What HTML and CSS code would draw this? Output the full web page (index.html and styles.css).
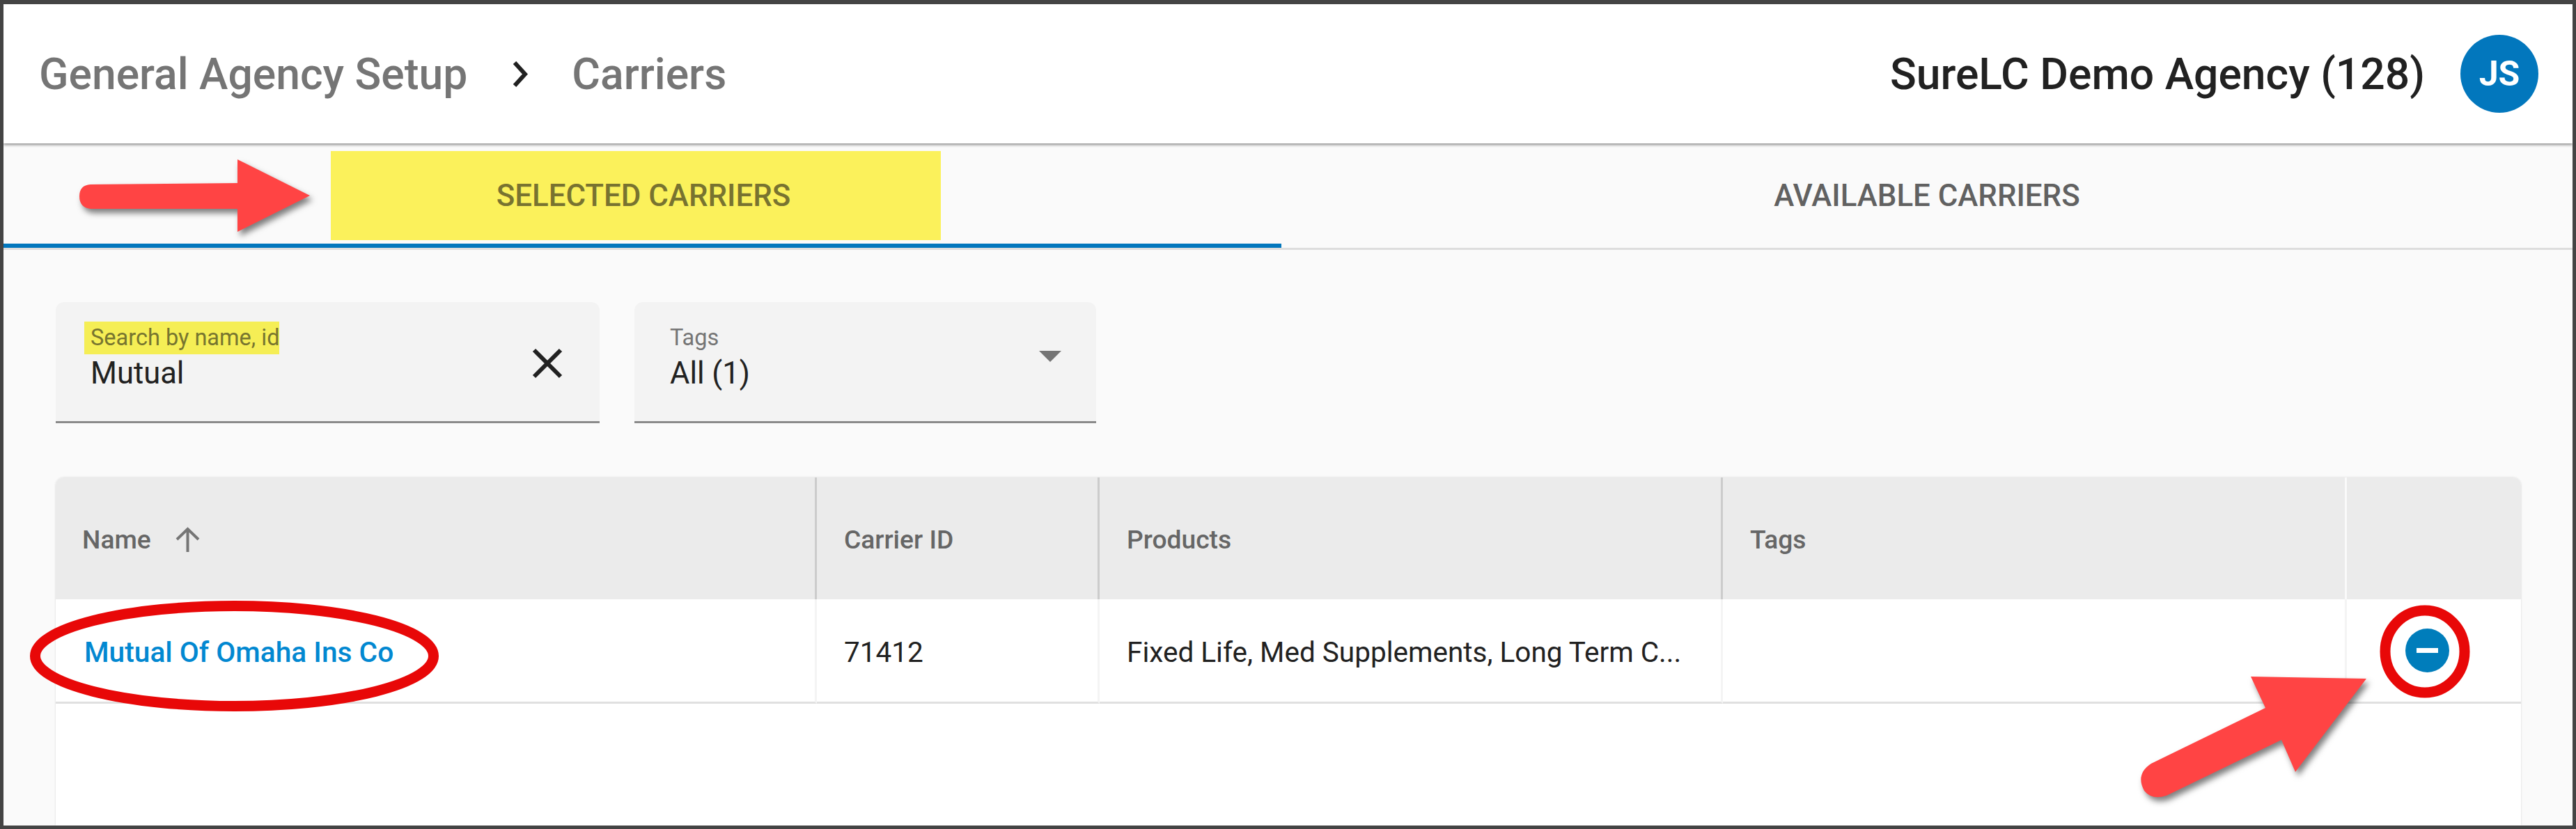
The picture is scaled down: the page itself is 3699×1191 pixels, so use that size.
FILE: index.html
```html
<!DOCTYPE html>
<html lang="en">
<head>
<meta charset="utf-8">
<title>Carriers</title>
<link rel="stylesheet" href="styles.css">
</head>
<body>
<div class="frame">
  <header class="topbar">
    <nav class="crumbs">
      <span class="crumb">General Agency Setup</span>
      <svg class="crumb-sep" viewBox="0 0 22 37" aria-hidden="true"><path d="M3 2 L18 18.5 L3 35"/></svg>
      <span class="crumb">Carriers</span>
    </nav>
    <div class="account">
      <span class="agency">SureLC Demo Agency (128)</span>
      <span class="avatar">JS</span>
    </div>
  </header>

  <div class="tabs">
    <div class="tab tab-active"><span class="tab-mark">SELECTED CARRIERS</span></div>
    <div class="tab">AVAILABLE CARRIERS</div>
  </div>

  <main class="content">
    <div class="filters">
      <div class="field field-search">
        <div class="field-body">
          <span class="field-label field-label-mark">Search by name, id</span>
          <span class="field-value">Mutual</span>
        </div>
        <svg class="clear-icon" viewBox="0 0 44 44" aria-hidden="true"><path d="M3 3 L41 41 M41 3 L3 41"/></svg>
      </div>
      <div class="field field-tags">
        <div class="field-body">
          <span class="field-label">Tags</span>
          <span class="field-value">All (1)</span>
        </div>
        <svg class="caret-icon" viewBox="0 0 32 16" aria-hidden="true"><path d="M0 0 H32 L16 16 Z"/></svg>
      </div>
    </div>

    <section class="table">
      <div class="row row-head">
        <div class="cell cell-name">Name
          <svg class="sort-icon" viewBox="0 0 37 36" aria-hidden="true"><path d="M18.5 36 V3 M3 18 L18.5 3 L34 18"/></svg>
        </div>
        <div class="cell">Carrier ID</div>
        <div class="cell">Products</div>
        <div class="cell">Tags</div>
        <div class="cell"></div>
      </div>
      <div class="row row-body">
        <div class="cell cell-link">Mutual Of Omaha Ins Co</div>
        <div class="cell">71412</div>
        <div class="cell">Fixed Life, Med Supplements, Long Term C...</div>
        <div class="cell"></div>
        <div class="cell cell-action">
          <svg class="remove-icon" viewBox="0 0 63 63" aria-hidden="true"><circle cx="31.5" cy="31.5" r="31.5"/><rect x="16" y="28" width="31" height="7"/></svg>
        </div>
      </div>
    </section>
  </main>

  <svg class="marks" viewBox="0 0 3699 1191" aria-hidden="true">
    <path class="mark-arrow" d="M130 265 L341 263 L341 229 L445 281 L341 333 L341 300 L130 300 Q114 298 114 282 Q114 266 130 265 Z"/>
    <ellipse class="mark-ring" cx="336.500" cy="942.500" rx="286" ry="72"/>
    <ellipse class="mark-ring" cx="3482" cy="936" rx="57" ry="59"/>
    <path class="mark-arrow" d="M3232 972 L3398 975 L3296 1109 L3276 1063 L3111 1143 Q3090 1150 3079 1136 Q3066 1112 3089 1097 L3253 1017 Z"/>
  </svg>
</div>
</body>
</html>
```
FILE: styles.css
```css
* { box-sizing: border-box; }
html, body { margin: 0; padding: 0; }
body { font-family: Roboto, "Liberation Sans", sans-serif; }

.frame {
  position: relative;
  display: flex;
  flex-direction: column;
  height: 1191px;
  overflow: hidden;
  background: #fafafa;
  border: solid #444444;
  border-width: 6px 5px 5px 5px;
}

.topbar {
  position: relative;
  z-index: 1;
  flex: none;
  display: flex;
  align-items: center;
  justify-content: space-between;
  height: 200px;
  padding: 0 49px 0 51px;
  background: #ffffff;
  box-shadow: 0 2px 4px rgba(0, 0, 0, 0.45);
}
.crumbs { display: flex; align-items: center; }
.crumb { font-size: 62.4px; font-weight: 500; color: #757575; }
.crumb-sep { width: 22px; height: 37px; margin: 0 63px 0 65px; fill: none; stroke: #212121; stroke-width: 6; }
.account { display: flex; align-items: center; gap: 51px; }
.agency { font-size: 62.4px; font-weight: 500; color: #212121; }
.avatar {
  display: flex;
  align-items: center;
  justify-content: center;
  width: 112px;
  height: 112px;
  border-radius: 50%;
  background: #0277bd;
  color: #ffffff;
  font-size: 50px;
  font-weight: 700;
}

.tabs {
  flex: none;
  display: flex;
  height: 153px;
  border-bottom: 3px solid #dddddd;
}
.tab {
  flex: 1;
  display: flex;
  align-items: center;
  justify-content: center;
  font-size: 43.8px;
  font-weight: 500;
  color: #616161;
}
.tab-active { flex: none; width: 1835px; height: 150px; border-bottom: 6px solid #0277bd; }
.tab-mark {
  display: flex;
  align-items: center;
  height: 128px;
  margin: 6px 19px 0 0;
  padding: 0 216px 0 238px;
  background: #fbf15b;
  color: #787330;
}

.content {
  flex: 1;
  min-height: 0;
  display: flex;
  flex-direction: column;
  gap: 78px;
  padding: 75px 74px 0 75px;
}
.filters { flex: none; display: flex; gap: 50px; }
.field {
  display: flex;
  align-items: center;
  justify-content: space-between;
  height: 174px;
  background: #f3f3f3;
  border-bottom: 3px solid #8a8a8a;
  border-radius: 12px 12px 0 0;
}
.field-search { width: 781px; padding: 0 53px 16px 41px; }
.field-tags { width: 663px; padding: 0 50px 16px 51px; }
.field-body { display: flex; flex-direction: column; align-items: flex-start; gap: 4px; }
.field-label { font-size: 32.5px; line-height: 47px; color: #757575; }
.field-label-mark { padding-left: 9px; background: #f5ee55; color: #77752f; }
.field-search .field-value { padding-left: 9px; }
.field-value { font-size: 43.5px; line-height: 48px; color: #212121; }
.clear-icon { width: 44px; height: 44px; margin-top: 20px; fill: none; stroke: #212121; stroke-width: 6; }
.caret-icon { width: 32px; height: 16px; margin-top: 1px; fill: #757575; }

.table {
  flex: 1;
  min-height: 0;
  background: #ffffff;
  border-radius: 12px 12px 0 0;
  box-shadow: 0 0 3px rgba(0, 0, 0, 0.15);
  overflow: hidden;
}
.row { display: grid; grid-template-columns: 1093px 406px 895px 896px 1fr; }
.cell {
  display: flex;
  align-items: center;
  min-width: 0;
  padding: 3px 0 0 39px;
  white-space: nowrap;
}
.row-head { height: 175px; background: #ebebeb; }
.row-head .cell { font-size: 37.2px; font-weight: 500; color: #666666; border-right: 3px solid #cccccc; }
.row-head .cell:nth-child(4) { border-right-color: #fafafa; }
.row-head .cell:last-child { border-right: 0; }
.row-head .cell-name { padding-left: 38px; }
.row-body { height: 150px; }
.row-body .cell { padding-top: 5px; font-size: 40.5px; color: #212121; border-right: 3px solid #f4f4f4; border-bottom: 3px solid #e0e0e0; }
.row-body .cell:last-child { border-right: 0; }
.cell-name { gap: 34px; }
.sort-icon { width: 37px; height: 36px; fill: none; stroke: #757575; stroke-width: 4; }
.row-body .cell-link { padding-left: 41px; font-size: 40.7px; font-weight: 500; color: #0288d1; }
.row-body .cell-action { padding: 0 0 0 84px; }
.remove-icon { width: 63px; height: 63px; fill: #007dbb; }
.remove-icon rect { fill: #ffffff; }

.marks { position: absolute; left: -5px; top: -6px; width: 3699px; height: 1191px; pointer-events: none; }
.mark-arrow { fill: #ff4444; filter: drop-shadow(4px 6px 4px rgba(0, 0, 0, 0.5)); }
.mark-ring { fill: none; stroke: #e80808; stroke-width: 15; }
```
